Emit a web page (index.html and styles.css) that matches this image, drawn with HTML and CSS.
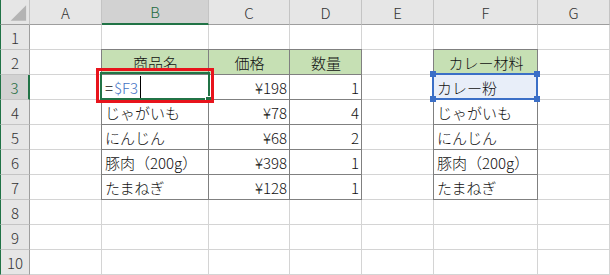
FILE: index.html
```html
<!DOCTYPE html>
<html lang="ja">
<head>
<meta charset="utf-8">
<link rel="stylesheet" href="styles.css">
</head>
<body>
<div class="sheet">
  <div class="c corner"><svg class="tri" width="29" height="24" viewBox="0 0 29 24"><polygon points="26,5 26,21 10,21" fill="#b4b4b4"/></svg></div>
  <div class="c ch">A</div>
  <div class="c ch sel">B</div>
  <div class="c ch">C</div>
  <div class="c ch">D</div>
  <div class="c ch">E</div>
  <div class="c ch">F</div>
  <div class="c ch">G</div>

  <div class="c rh">1</div>
  <div class="c"></div><div class="c"></div><div class="c"></div><div class="c"></div><div class="c"></div><div class="c"></div><div class="c"></div>

  <div class="c rh">2</div>
  <div class="c"></div>
  <div class="c t th">商品名</div>
  <div class="c t th">価格</div>
  <div class="c t th">数量</div>
  <div class="c"></div>
  <div class="c t th">カレー材料</div>
  <div class="c"></div>

  <div class="c rh sel">3</div>
  <div class="c"></div>
  <div class="c t"><span class="eq">=</span><span class="ref">$F3</span><span class="caret"></span></div>
  <div class="c t num">¥198</div>
  <div class="c t num">1</div>
  <div class="c"></div>
  <div class="c t hl">カレー粉</div>
  <div class="c"></div>

  <div class="c rh">4</div>
  <div class="c"></div>
  <div class="c t">じゃがいも</div>
  <div class="c t num">¥78</div>
  <div class="c t num">4</div>
  <div class="c"></div>
  <div class="c t">じゃがいも</div>
  <div class="c"></div>

  <div class="c rh">5</div>
  <div class="c"></div>
  <div class="c t">にんじん</div>
  <div class="c t num">¥68</div>
  <div class="c t num">2</div>
  <div class="c"></div>
  <div class="c t">にんじん</div>
  <div class="c"></div>

  <div class="c rh">6</div>
  <div class="c"></div>
  <div class="c t">豚肉（200g）</div>
  <div class="c t num">¥398</div>
  <div class="c t num">1</div>
  <div class="c"></div>
  <div class="c t">豚肉（200g）</div>
  <div class="c"></div>

  <div class="c rh">7</div>
  <div class="c"></div>
  <div class="c t">たまねぎ</div>
  <div class="c t num">¥128</div>
  <div class="c t num">1</div>
  <div class="c"></div>
  <div class="c t">たまねぎ</div>
  <div class="c"></div>

  <div class="c rh">8</div>
  <div class="c"></div><div class="c"></div><div class="c"></div><div class="c"></div><div class="c"></div><div class="c"></div><div class="c"></div>

  <div class="c rh">9</div>
  <div class="c"></div><div class="c"></div><div class="c"></div><div class="c"></div><div class="c"></div><div class="c"></div><div class="c"></div>

  <div class="c rh">10</div>
  <div class="c"></div><div class="c"></div><div class="c"></div><div class="c"></div><div class="c"></div><div class="c"></div><div class="c"></div>

  <div class="active"></div>
  <div class="fill-handle"></div>
  <div class="refbox"></div>
  <div class="knob k1"></div>
  <div class="knob k2"></div>
  <div class="knob k3"></div>
  <div class="knob k4"></div>
  <div class="redbox"></div>
</div>
</body>
</html>
```

FILE: styles.css
```css
html, body {
  margin: 0;
  padding: 0;
  background: #ffffff;
}

.sheet {
  position: relative;
  width: 610px;
  height: 275px;
  overflow: hidden;
  display: grid;
  grid-template-columns: 30px 72px 107px 81px 72px 72px 104px 72px;
  grid-auto-rows: 25px;
  font-family: "Noto Sans CJK JP", "Noto Sans", sans-serif;
  font-size: 15px;
  font-weight: 300;
  color: #111111;
}

.c {
  box-sizing: border-box;
  border-right: 1px solid #d4d4d4;
  border-bottom: 1px solid #d4d4d4;
  display: flex;
  align-items: center;
  padding: 0 2px 0 3px;
  white-space: nowrap;
  overflow: hidden;
  line-height: 1;
  background: #ffffff;
}

.corner {
  background: #e6e6e6;
  border-left: 1px solid #217346;
  border-right: 1px solid #c4c4c4;
  border-bottom: 1px solid #9e9e9e;
  padding: 0;
}

.tri {
  display: block;
}

.ch {
  background: #e6e6e6;
  border-right: 1px solid #c4c4c4;
  border-bottom: 1px solid #9e9e9e;
  justify-content: center;
  font-size: 15px;
  color: #333333;
  padding: 0;
}

.ch.sel {
  background: #d2d2d2;
  color: #1e6b40;
  border-bottom: 2px solid #217346;
}

.rh {
  background: #e6e6e6;
  border-left: 1px solid #217346;
  border-right: 1px solid #9e9e9e;
  border-bottom: 1px solid #c4c4c4;
  justify-content: center;
  font-size: 15px;
  color: #333333;
  padding: 0;
}

.rh.sel {
  background: #d2d2d2;
  color: #1e6b40;
  border-right: 2px solid #217346;
}

.t {
  border-right-color: #808080;
  border-bottom-color: #808080;
  box-shadow: -1px -1px 0 #808080, 0 -1px 0 #808080, -1px 0 0 #808080;
}

.th {
  background: #c6e0b4;
  justify-content: center;
}

.num {
  justify-content: flex-end;
}

.hl {
  background: #e8eef9;
}

.eq {
  color: #111111;
  margin-right: 1px;
}

.ref {
  color: #4472c4;
}

.caret {
  display: inline-block;
  width: 1px;
  height: 22px;
  background: #000000;
  margin-left: 2px;
}

.active {
  position: absolute;
  left: 100px;
  top: 72px;
  width: 110px;
  height: 28px;
  box-sizing: border-box;
  border: 2px solid #217346;
  z-index: 2;
}

.fill-handle {
  position: absolute;
  left: 205px;
  top: 96px;
  width: 5px;
  height: 5px;
  background: #217346;
  border-left: 1px solid #ffffff;
  border-top: 1px solid #ffffff;
  z-index: 3;
}

.refbox {
  position: absolute;
  left: 432px;
  top: 73px;
  width: 106px;
  height: 27px;
  box-sizing: border-box;
  border: 2px solid #3b6fc7;
  z-index: 2;
}

.knob {
  position: absolute;
  width: 6px;
  height: 6px;
  background: #3b6fc7;
  z-index: 3;
}

.k1 { left: 430px; top: 71px; }
.k2 { left: 534px; top: 71px; }
.k3 { left: 430px; top: 96px; }
.k4 { left: 534px; top: 96px; }

.redbox {
  position: absolute;
  left: 96px;
  top: 68px;
  width: 118px;
  height: 35px;
  box-sizing: border-box;
  border: 3px solid #e8141c;
  z-index: 4;
}
```
